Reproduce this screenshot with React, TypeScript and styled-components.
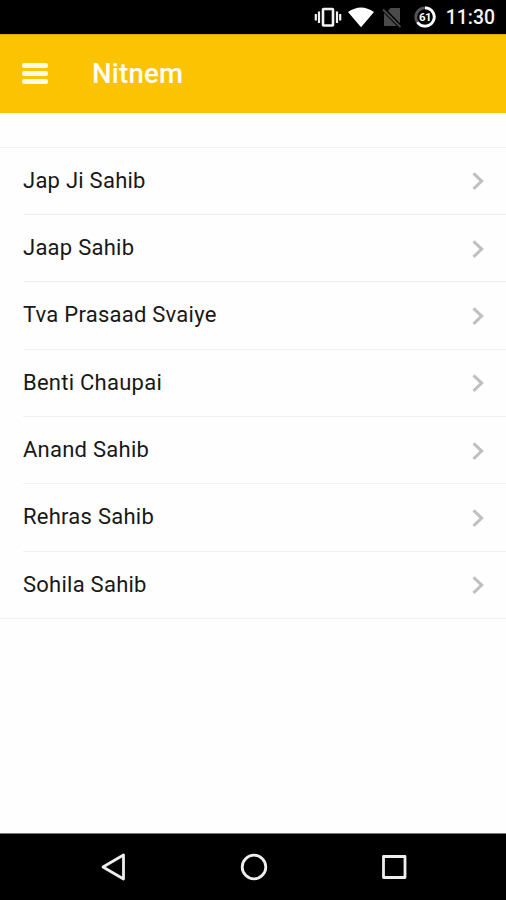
import React from 'react';
import styled, { createGlobalStyle } from 'styled-components';

const GlobalStyle = createGlobalStyle`
  * { box-sizing: border-box; }
  body { margin: 0; background: #fff; font-family: Roboto, "Liberation Sans", sans-serif; }
`;

const Screen = styled.div`
  width: 506px;
  height: 900px;
  display: flex;
  flex-direction: column;
  background: #fefefe;
  overflow: hidden;
`;

const StatusBar = styled.header`
  height: 34px;
  flex: none;
  display: flex;
  align-items: center;
  justify-content: flex-end;
  padding-right: 11px;
  background: #000;
`;

const StatusIcon = styled.svg<{ $gap: number }>`
  flex: none;
  display: block;
  margin-right: ${(p) => p.$gap}px;
`;

const Clock = styled.time`
  color: #f4f4f4;
  font-size: 19.4px;
  line-height: 34px;
  font-weight: 500;
  padding-top: 2px;
`;

const AppBar = styled.div`
  height: 79px;
  flex: none;
  display: flex;
  align-items: center;
  padding-left: 22px;
  background: #fcc302;
  border-top: 1px solid #d9a703;
`;

const MenuButton = styled.button`
  width: 26px;
  height: 21px;
  margin-bottom: 2px;
  padding: 0;
  border: 0;
  background: none;
  display: flex;
  flex-direction: column;
  justify-content: space-between;
`;

const MenuBar = styled.span`
  height: 5px;
  width: 26px;
  border-radius: 2px;
  background: #fffbe8;
`;

const Title = styled.h1`
  margin: 0 0 0 44px;
  color: #fffef8;
  font-size: 27.6px;
  line-height: 32px;
  font-weight: 500;
  letter-spacing: 0.2px;
`;

const List = styled.ul`
  list-style: none;
  margin: 34px 0 0;
  padding: 0;
  height: 472px;
  flex: none;
  display: grid;
  grid-template-rows: 66px repeat(6, 1fr);
  border-top: 1px solid #f1f1f1;
  border-bottom: 1px solid #f1f1f1;
`;

const Row = styled.li`
  margin-left: 23px;
  padding-right: 21px;
  display: flex;
  align-items: center;
  justify-content: space-between;
  & + & {
    padding-top: 1px;
    border-top: 1px solid #f1f1f1;
  }
`;

const Label = styled.span`
  color: #181818;
  font-size: 22px;
  line-height: 28px;
  letter-spacing: 0.25px;
  margin-top: -1px;
`;

const NavBar = styled.nav`
  height: 67px;
  flex: none;
  margin-top: auto;
  padding-left: 1px;
  display: flex;
  align-items: center;
  justify-content: center;
  gap: 113px;
  background: #000;
  border-top: 1px solid #777;
`;

const items = [
  'Jap Ji Sahib',
  'Jaap Sahib',
  'Tva Prasaad Svaiye',
  'Benti Chaupai',
  'Anand Sahib',
  'Rehras Sahib',
  'Sohila Sahib',
];

const Chevron = () => (
  <svg width="14" height="20" viewBox="0 0 14 20" fill="none" stroke="#c0c0c0" strokeWidth="3">
    <path d="M2.5 2.3L10.7 10.1L2.5 17.9" />
  </svg>
);

export default function App() {
  return (
    <>
      <GlobalStyle />
      <Screen>
        <StatusBar>
          <StatusIcon $gap={6} width="28" height="22" viewBox="0 0 28 22" fill="none" stroke="#f2f2f2">
            <rect x="9" y="3" width="10" height="16.5" strokeWidth="2.6" rx="0.5" />
            <path d="M5 5.5V17M23 5.5V17M1.8 8V14.5M26.2 8V14.5" strokeWidth="2.2" />
          </StatusIcon>
          <StatusIcon $gap={8} width="26" height="22" viewBox="0 0 26 22" fill="#fff">
            <path d="M0 6Q13-3 26 6L13 21.3Z" />
          </StatusIcon>
          <StatusIcon $gap={12} width="20" height="22" viewBox="0 0 20 22">
            <path d="M8.5 2H18V17.2L6 5Z M2 7L14.8 20H2Z" fill="#4a4a4a" />
            <path d="M1 3.5L18.5 21" stroke="#4a4a4a" strokeWidth="1.8" />
          </StatusIcon>
          <StatusIcon $gap={10} width="22" height="22" viewBox="0 0 22 22">
            <circle cx="11" cy="11" r="9.2" fill="none" stroke="#555" strokeWidth="2.8" />
            <path d="M11 1.8A9.2 9.2 0 1 1 3.5 16.3" fill="none" stroke="#fff" strokeWidth="2.8" />
            <text x="11" y="15" textAnchor="middle" fontSize="11.5" fontWeight="700" letterSpacing="-0.6" fill="#fff">61</text>
          </StatusIcon>
          <Clock>11:30</Clock>
        </StatusBar>
        <AppBar>
          <MenuButton aria-label="Menu">
            <MenuBar />
            <MenuBar />
            <MenuBar />
          </MenuButton>
          <Title>Nitnem</Title>
        </AppBar>
        <List>
          {items.map((item) => (
            <Row key={item}>
              <Label>{item}</Label>
              <Chevron />
            </Row>
          ))}
        </List>
        <NavBar>
          <svg width="28" height="30" viewBox="0 0 28 30" fill="none" stroke="#eee" strokeWidth="2.8" strokeLinejoin="round">
            <path d="M24.5 3V27L4 15Z" />
          </svg>
          <svg width="28" height="30" viewBox="0 0 28 30" fill="none" stroke="#eee" strokeWidth="2.8">
            <circle cx="14" cy="15" r="11.8" />
          </svg>
          <svg width="28" height="30" viewBox="0 0 28 30" fill="none" stroke="#eee" strokeWidth="2.8" strokeLinejoin="round">
            <rect x="2.5" y="4.5" width="21.5" height="21" />
          </svg>
        </NavBar>
      </Screen>
    </>
  );
}
